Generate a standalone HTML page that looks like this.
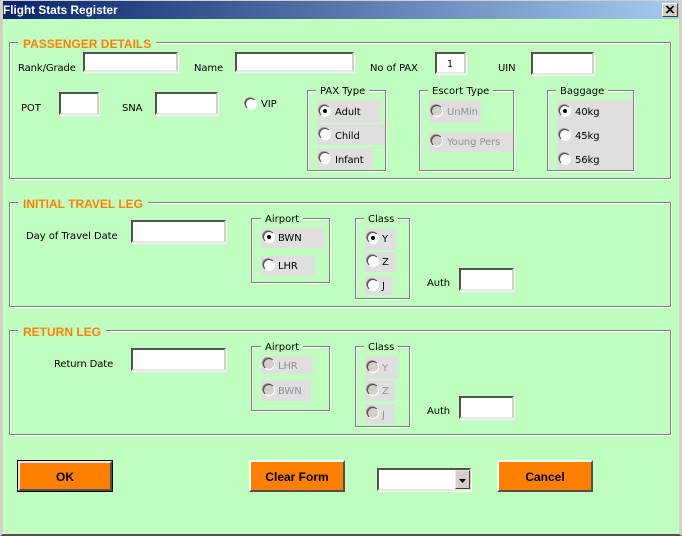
<!DOCTYPE html>
<html><head><meta charset="utf-8"><style>
html,body{margin:0;padding:0;background:#c0ffc0}
#w{position:relative;width:682px;height:536px;overflow:hidden;background:#c0ffc0;font-family:"DejaVu Sans","Liberation Sans",sans-serif;font-size:10px;color:#000}
#w div{position:absolute;box-sizing:border-box}
.t{white-space:nowrap;line-height:14px;height:14px;letter-spacing:-.1px}
.f{border:1px solid #808080;box-shadow:1px 1px 0 #fff,inset 1px 1px 0 #fff}
.h{font-family:"Liberation Sans",sans-serif;font-weight:bold;font-size:12px;color:#ff8000;background:#c0ffc0;padding:0 5px;line-height:14px;height:14px;white-space:nowrap}
.l{background:#c0ffc0;padding:0 4px;line-height:14px;height:14px;white-space:nowrap;font-size:10px}
.i{background:#fff;border:2px solid;border-color:#505050 #d4d0c8 #e8e8e8 #505050;box-shadow:1px 1px 0 #fff}
.g{background:#dfdfdf}
.r{width:12px;height:12px;border-radius:50%;background:#fff;border:1px solid;border-color:#505050 #fff #fff #505050;box-shadow:-1px -1px 0 -0.2px #808080}
.r.d{background:#d4d0c8}
.r.c:after{content:"";position:absolute;left:3px;top:3px;width:4px;height:4px;border-radius:50%;background:#000}
.x{color:#8f8f98}
.b{background:#ff8000;font-family:"Liberation Sans",sans-serif;font-weight:bold;font-size:12px;text-align:center;line-height:31px;border:2px solid;border-color:#fff #505050 #505050 #fff}
</style></head><body><div id="w">
<div style="left:0;top:0;width:682px;height:536px;border-left:3px solid #d4d0c8;border-right:3px solid #d4d0c8;border-bottom:2px solid #505050"></div>
<div style="left:0;top:0;width:682px;height:1px;background:#d4d0c8"></div>
<div style="left:3px;top:1px;width:676px;height:18px;background:linear-gradient(90deg,#0a246a,#a6caf0)"></div>
<div class="t" style="left:3px;top:3px;color:#fff;font-family:'Liberation Sans',sans-serif;font-weight:bold;font-size:11.8px;letter-spacing:0;line-height:15px">Flight Stats Register</div>
<div style="left:662px;top:3px;width:16px;height:14px;background:#d4d0c8;border:1px solid;border-color:#fff #404040 #404040 #fff"><svg width="14" height="12" style="position:absolute;left:0;top:0"><path d="M3 2L10 9M4 2L11 9M10 2L3 9M11 2L4 9" stroke="#000" stroke-width="1"/></svg></div>

<!-- frames -->
<div class="f" style="left:9px;top:42px;width:662px;height:137px"></div>
<div class="h" style="left:18px;top:37px">PASSENGER DETAILS</div>
<div class="f" style="left:9px;top:202px;width:662px;height:105px"></div>
<div class="h" style="left:18px;top:197px">INITIAL TRAVEL LEG</div>
<div class="f" style="left:9px;top:330px;width:662px;height:105px"></div>
<div class="h" style="left:18px;top:325px">RETURN LEG</div>

<!-- passenger -->
<div class="t" style="left:18px;top:62px">Rank/Grade</div>
<div class="i" style="left:83px;top:52px;width:95px;height:20px"></div>
<div class="t" style="left:194px;top:62px">Name</div>
<div class="i" style="left:235px;top:52px;width:119px;height:20px"></div>
<div class="t" style="left:370px;top:62px">No of PAX</div>
<div class="i" style="left:435px;top:52px;width:31px;height:22px"></div>
<div class="t" style="left:447px;top:58px;font-size:9.5px">1</div>
<div class="t" style="left:498px;top:62px">UIN</div>
<div class="i" style="left:531px;top:52px;width:63px;height:23px"></div>
<div class="t" style="left:21px;top:102px">POT</div>
<div class="i" style="left:59px;top:92px;width:40px;height:23px"></div>
<div class="t" style="left:122px;top:102px">SNA</div>
<div class="i" style="left:155px;top:92px;width:63px;height:23px"></div>
<div class="r" style="left:245px;top:98px"></div>
<div class="t" style="left:261px;top:98px">VIP</div>

<!-- PAX -->
<div class="f" style="left:307px;top:90px;width:79px;height:81px"></div>
<div class="l" style="left:316px;top:85px">PAX Type</div>
<div class="g" style="left:317px;top:100px;width:64px;height:23px"></div>
<div class="g" style="left:317px;top:124px;width:68px;height:21px"></div>
<div class="g" style="left:317px;top:148px;width:56px;height:21px"></div>
<div class="r c" style="left:319px;top:105px"></div><div class="t" style="left:335px;top:106px">Adult</div>
<div class="r" style="left:319px;top:128px"></div><div class="t" style="left:335px;top:130px">Child</div>
<div class="r" style="left:319px;top:152px"></div><div class="t" style="left:335px;top:154px">Infant</div>

<!-- Escort -->
<div class="f" style="left:419px;top:90px;width:95px;height:81px"></div>
<div class="l" style="left:428px;top:85px">Escort Type</div>
<div class="g" style="left:429px;top:100px;width:52px;height:23px"></div>
<div class="g" style="left:429px;top:132px;width:84px;height:20px"></div>
<div class="r d" style="left:431px;top:105px"></div><div class="t x" style="left:447px;top:106px">UnMin</div>
<div class="r d" style="left:431px;top:135px"></div><div class="t x" style="left:447px;top:136px">Young Pers</div>

<!-- Baggage -->
<div class="f" style="left:547px;top:90px;width:87px;height:81px"></div>
<div class="l" style="left:556px;top:85px">Baggage</div>
<div class="g" style="left:557px;top:100px;width:76px;height:70px"></div>
<div class="r c" style="left:559px;top:105px"></div><div class="t" style="left:575px;top:106px">40kg</div>
<div class="r" style="left:559px;top:129px"></div><div class="t" style="left:575px;top:130px">45kg</div>
<div class="r" style="left:559px;top:153px"></div><div class="t" style="left:575px;top:154px">56kg</div>

<!-- Initial -->
<div class="t" style="left:26px;top:230px;letter-spacing:-.05px">Day of Travel Date</div>
<div class="i" style="left:131px;top:220px;width:95px;height:23px"></div>
<div class="f" style="left:251px;top:218px;width:79px;height:65px"></div>
<div class="l" style="left:261px;top:213px">Airport</div>
<div class="g" style="left:261px;top:228px;width:64px;height:20px"></div>
<div class="g" style="left:261px;top:256px;width:54px;height:20px"></div>
<div class="r c" style="left:263px;top:231px"></div><div class="t" style="left:278px;top:232px">BWN</div>
<div class="r" style="left:263px;top:259px"></div><div class="t" style="left:278px;top:260px">LHR</div>
<div class="f" style="left:355px;top:218px;width:55px;height:81px"></div>
<div class="l" style="left:364px;top:213px">Class</div>
<div class="g" style="left:365px;top:228px;width:31px;height:22px"></div>
<div class="g" style="left:365px;top:252px;width:31px;height:20px"></div>
<div class="g" style="left:365px;top:276px;width:28px;height:19px"></div>
<div class="r c" style="left:367px;top:232px"></div><div class="t" style="left:382px;top:233px">Y</div>
<div class="r" style="left:367px;top:255px"></div><div class="t" style="left:382px;top:256px">Z</div>
<div class="r" style="left:367px;top:279px"></div><div class="t" style="left:382px;top:280px">J</div>
<div class="t" style="left:427px;top:277px">Auth</div>
<div class="i" style="left:459px;top:268px;width:55px;height:23px"></div>

<!-- Return -->
<div class="t" style="left:54px;top:358px">Return Date</div>
<div class="i" style="left:131px;top:348px;width:95px;height:23px"></div>
<div class="f" style="left:251px;top:346px;width:79px;height:65px"></div>
<div class="l" style="left:261px;top:341px">Airport</div>
<div class="g" style="left:261px;top:356px;width:52px;height:18px"></div>
<div class="g" style="left:261px;top:380px;width:50px;height:21px"></div>
<div class="r d" style="left:263px;top:358px"></div><div class="t x" style="left:278px;top:360px">LHR</div>
<div class="r d" style="left:263px;top:384px"></div><div class="t x" style="left:278px;top:385px">BWN</div>
<div class="f" style="left:355px;top:346px;width:55px;height:81px"></div>
<div class="l" style="left:364px;top:341px">Class</div>
<div class="g" style="left:365px;top:356px;width:33px;height:23px"></div>
<div class="g" style="left:365px;top:380px;width:30px;height:21px"></div>
<div class="g" style="left:365px;top:404px;width:30px;height:20px"></div>
<div class="r d" style="left:367px;top:361px"></div><div class="t x" style="left:382px;top:362px">Y</div>
<div class="r d" style="left:367px;top:384px"></div><div class="t x" style="left:382px;top:385px">Z</div>
<div class="r d" style="left:367px;top:407px"></div><div class="t x" style="left:382px;top:409px">J</div>
<div class="t" style="left:427px;top:405px">Auth</div>
<div class="i" style="left:459px;top:396px;width:55px;height:23px"></div>

<!-- Buttons -->
<div style="left:17px;top:460px;width:96px;height:32px;border:1px solid #000"><div class="b" style="left:0;top:0;width:94px;height:30px;line-height:29px;border-color:#e8e8e8 #505050 #505050 #e8e8e8">OK</div></div>
<div class="b" style="left:249px;top:460px;width:96px;height:32px">Clear Form</div>
<div class="b" style="left:497px;top:460px;width:96px;height:32px">Cancel</div>
<div class="i" style="left:377px;top:468px;width:94px;height:23px"></div>
<div style="left:455px;top:470px;width:15px;height:19px;background:#d4d0c8;border:1px solid;border-color:#e8e8e8 #404040 #404040 #e8e8e8"><svg width="13" height="17" style="position:absolute;left:0;top:0"><path d="M3 8H10L6.5 12Z" fill="#000"/></svg></div>
</div></body></html>
